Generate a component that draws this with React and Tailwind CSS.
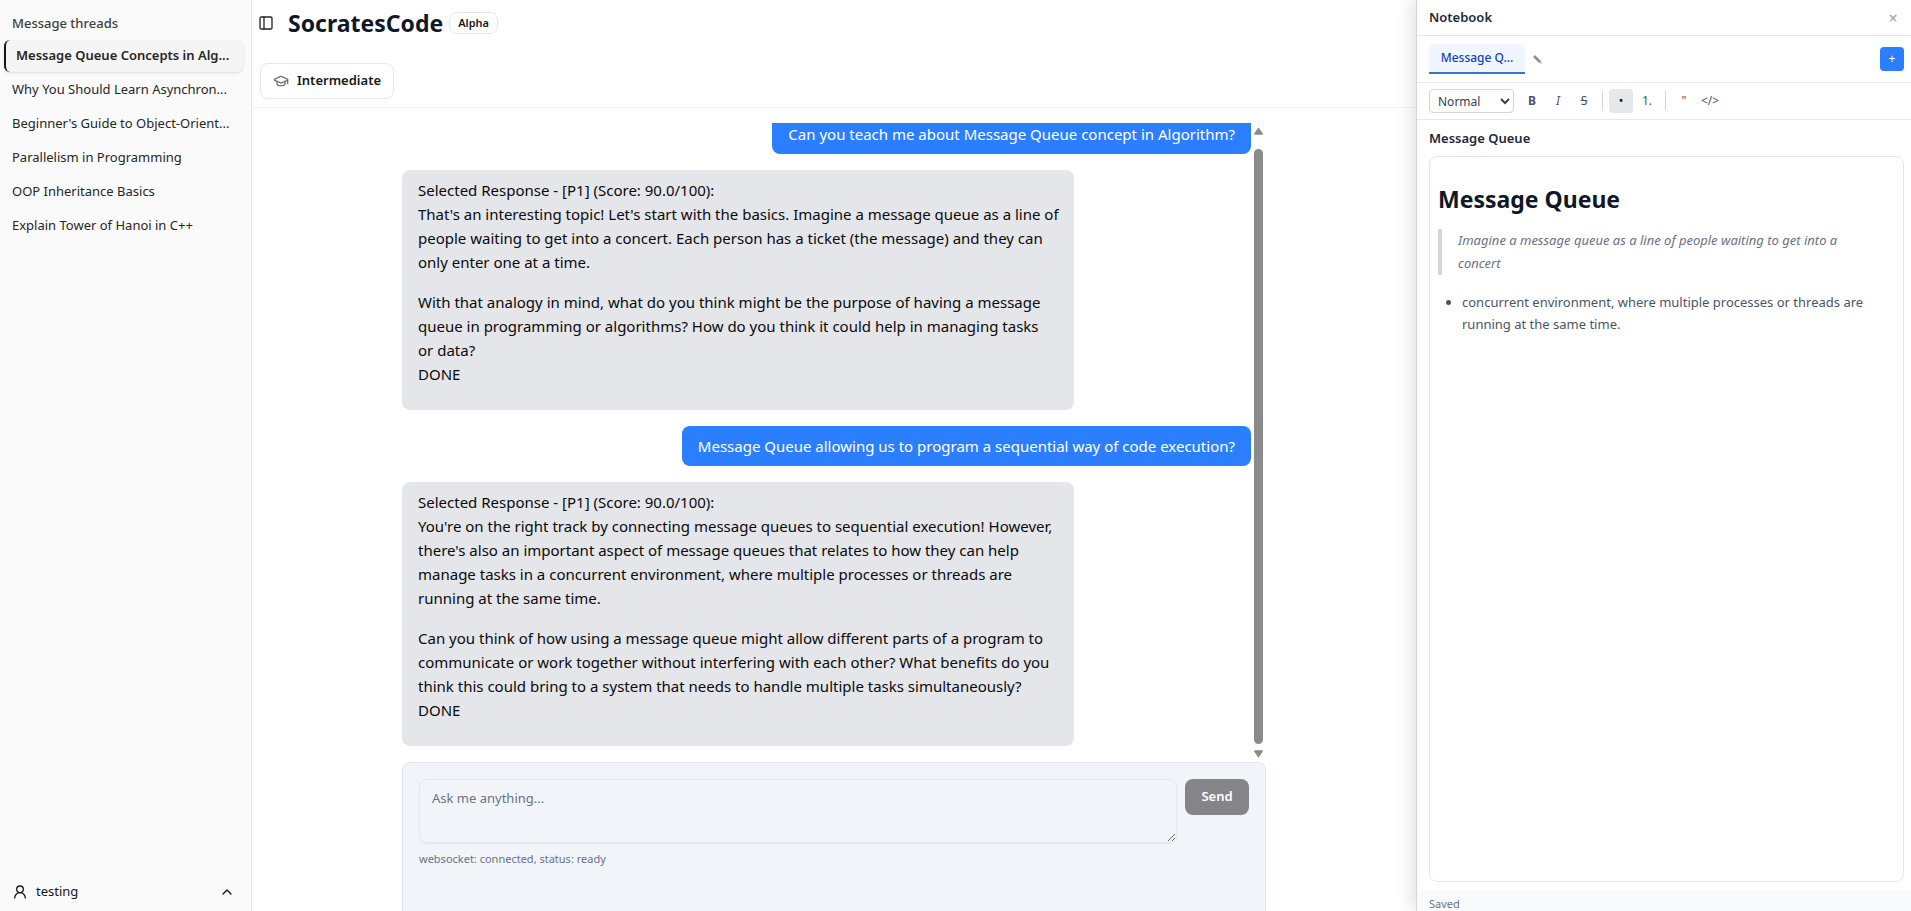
import { useState } from "react";
import { PanelLeft, GraduationCap, UserRound, ChevronUp } from "lucide-react";

const threads = [
  "Message Queue Concepts in Alg...",
  "Why You Should Learn Asynchron...",
  "Beginner's Guide to Object-Orient...",
  "Parallelism in Programming",
  "OOP Inheritance Basics",
  "Explain Tower of Hanoi in C++",
];

const messages = [
  { from: "user", text: ["Can you teach me about Message Queue concept in Algorithm?"] },
  {
    from: "bot",
    text: [
      "Selected Response - [P1] (Score: 90.0/100):\nThat's an interesting topic! Let's start with the basics. Imagine a message queue as a line of people waiting to get into a concert. Each person has a ticket (the message) and they can only enter one at a time.",
      "With that analogy in mind, what do you think might be the purpose of having a message queue in programming or algorithms? How do you think it could help in managing tasks\nor data?\nDONE",
    ],
  },
  { from: "user", text: ["Message Queue allowing us to program a sequential way of code execution?"] },
  {
    from: "bot",
    text: [
      "Selected Response - [P1] (Score: 90.0/100):\nYou're on the right track by connecting message queues to sequential execution! However, there's also an important aspect of message queues that relates to how they can help manage tasks in a concurrent environment, where multiple processes or threads are running at the same time.",
      "Can you think of how using a message queue might allow different parts of a program to communicate or work together without interfering with each other? What benefits do you think this could bring to a system that needs to handle multiple tasks simultaneously?\nDONE",
    ],
  },
];

function Sidebar() {
  const [active, setActive] = useState(0);

  return (
    <aside className="w-[252px] shrink-0 flex flex-col bg-[#fafafa] border-r border-gray-200">
      <h2 className="px-3 pt-[11px] h-10 text-[13px] leading-6 font-medium text-neutral-700">Message threads</h2>
      <nav className="flex-1 flex flex-col gap-0.5 pl-1 pr-2">
        {threads.map((t, i) => (
          <button
            key={t}
            onClick={() => setActive(i)}
            className={
              i === active
                ? "h-8 pl-2.5 text-left whitespace-nowrap text-[13px] font-semibold text-neutral-800 bg-neutral-100 rounded-md border-l-2 border-neutral-900 shadow-sm"
                : "h-8 pl-2 text-left whitespace-nowrap text-[13px] text-neutral-800"
            }
          >
            {t}
          </button>
        ))}
      </nav>
      <button className="flex items-center gap-2 h-[38px] pl-3 pr-4 text-[13px] text-neutral-900">
        <UserRound size={16} />
        <span className="flex-1 text-left">testing</span>
        <ChevronUp size={16} />
      </button>
    </aside>
  );
}

function Header() {
  return (
    <header className="h-[108px] shrink-0 flex flex-col border-b border-gray-100">
      <div className="flex items-center h-[46px] pl-1.5">
        <button aria-label="Toggle sidebar" className="text-neutral-800">
          <PanelLeft size={16} />
        </button>
        <h1 className="ml-3.5 text-[23px] font-bold text-gray-900">SocratesCode</h1>
        <span className="ml-1.5 h-[22px] px-2 flex items-center text-[11px] font-semibold text-neutral-900 border border-gray-200 rounded-lg">
          Alpha
        </span>
      </div>
      <div className="pl-2 pt-[17px]">
        <button className="flex items-center gap-2 h-9 px-3 text-[13px] font-semibold text-neutral-900 bg-white border border-gray-200 rounded-lg">
          <GraduationCap size={16} className="text-neutral-500" />
          Intermediate
        </button>
      </div>
    </header>
  );
}

function Scrollbar() {
  return (
    <div className="w-[15px] shrink-0 flex flex-col items-center py-1 text-[#8b8b8b]">
      <svg width="9" height="8" viewBox="0 0 9 8" fill="currentColor">
        <path d="M4.5 0.2 L8.8 6.4 Q9.1 7.8 7.8 7.8 H1.2 Q-0.1 7.8 0.2 6.4 Z" />
      </svg>
      <div className="w-[9px] flex-1 mt-3.5 mb-1.5 rounded-full bg-[#8b8b8b]" />
      <svg width="9" height="8" viewBox="0 0 9 8" fill="currentColor">
        <path d="M4.5 7.8 L8.8 1.6 Q9.1 0.2 7.8 0.2 H1.2 Q-0.1 0.2 0.2 1.6 Z" />
      </svg>
    </div>
  );
}

function Message({ msg }) {
  if (msg.from === "user") {
    return (
      <div className="self-end shrink-0 px-4 py-2 rounded-lg bg-[#2b7fff] text-white">{msg.text[0]}</div>
    );
  }
  return (
    <div className="self-start shrink-0 max-w-2xl pl-4 pr-3 py-2 rounded-lg bg-[#e5e6ea] text-neutral-950">
      {msg.text.map((p) => (
        <p key={p} className="mb-4 whitespace-pre-line">{p}</p>
      ))}
    </div>
  );
}

function Chat() {
  const [text, setText] = useState("");

  return (
    <div className="flex-1 min-h-0 w-full max-w-4xl mx-auto px-4 pt-[15px] flex flex-col">
      <div className="flex-1 min-h-0 flex">
        <div className="flex-1 flex flex-col justify-end gap-4 pb-4 overflow-hidden text-[15px] leading-6">
          {messages.map((m, i) => (
            <Message key={i} msg={m} />
          ))}
        </div>
        <Scrollbar />
      </div>
      <form
        onSubmit={(e) => e.preventDefault()}
        className="h-[149px] shrink-0 p-4 bg-slate-100 border border-b-0 border-slate-200 rounded-t-lg"
      >
        <div className="flex items-start gap-2">
          <textarea
            aria-label="Message"
            value={text}
            onChange={(e) => setText(e.target.value)}
            placeholder="Ask me anything..."
            className="flex-1 h-16 px-3 py-2 text-[13px] leading-5 border border-gray-200 rounded-lg shadow-xs placeholder:text-gray-500"
          />
          <button className="w-16 h-9 text-[13px] font-semibold text-white bg-[#858588] rounded-lg">Send</button>
        </div>
        <p className="mt-2 text-[11px] leading-4 text-gray-500">websocket: connected, status: ready</p>
      </form>
    </div>
  );
}

const toolBtn = "w-6 h-6 flex items-center justify-center rounded-sm text-xs text-gray-600";

function Notebook() {
  return (
    <aside className="w-[495px] shrink-0 z-10 flex flex-col bg-white border-l border-gray-300 shadow-[-4px_0_16px_rgba(0,0,0,0.12)]">
      <div className="h-9 shrink-0 flex items-center justify-between px-3 border-b border-gray-200">
        <h2 className="text-[13px] font-semibold text-gray-800">Notebook</h2>
        <button aria-label="Close" className="w-3 text-base text-gray-400">×</button>
      </div>
      <div className="h-[47px] shrink-0 flex items-center pl-3 pr-[7px] border-b border-gray-200">
        <button className="h-[30px] w-24 whitespace-nowrap text-xs font-medium text-blue-800 bg-[#eff6ff] border-b-2 border-[#3578c8] rounded-t-md">
          Message Q...
        </button>
        <button aria-label="Rename" className="ml-2 text-gray-400">
          <svg width="9" height="9" viewBox="0 0 9 9" fill="none">
            <path d="M1 1 L7 7" stroke="#8b9099" strokeWidth="2.6" />
            <path d="M6 7.8 L7.8 6 L8.8 8.8 Z" fill="#a7abb2" />
          </svg>
        </button>
        <button aria-label="New note" className="ml-auto w-6 h-6 text-xs text-white bg-[#2b7fff] rounded-sm">+</button>
      </div>
      <div className="h-[37px] shrink-0 flex items-center gap-0.5 px-3 border-b border-gray-200">
        <select aria-label="Text style" className="w-[85px] h-6 mr-1 pl-1 text-xs text-gray-700 bg-white border border-gray-300 rounded-sm">
          <option>Normal</option>
          <option>Heading 1</option>
          <option>Heading 2</option>
        </select>
        <button className={toolBtn + " font-bold"}>B</button>
        <button className={toolBtn + " italic"}>I</button>
        <button className={toolBtn + " line-through"}>S</button>
        <div className="w-px h-5 mx-1 bg-gray-300" />
        <button className="w-6 h-6 flex items-center justify-center rounded-sm text-xs text-gray-900 bg-gray-200">•</button>
        <button className={toolBtn}>1.</button>
        <div className="w-px h-5 mx-1 bg-gray-300" />
        <button className={toolBtn}>"</button>
        <button className={toolBtn}>&lt;/&gt;</button>
      </div>
      <div className="flex-1 min-h-0 flex flex-col pl-3 pr-[7px] pt-2 pb-2">
        <h3 className="h-7 text-[13px] leading-5 font-semibold text-gray-800">Message Queue</h3>
        <div className="flex-1 px-2 pt-6 border border-gray-200 rounded-lg text-[13px] text-gray-600">
          <h1 className="mb-3 text-[23px] leading-9 font-bold text-gray-900">Message Queue</h1>
          <blockquote className="mb-4 pl-4 pr-8 border-l-4 border-gray-300 italic leading-[23px] text-gray-500">
            Imagine a message queue as a line of people waiting to get into a concert
          </blockquote>
          <ul className="list-disc pl-6 leading-[22px]">
            <li>concurrent environment, where multiple processes or threads are running at the same time.</li>
          </ul>
        </div>
      </div>
      <div className="h-[21px] shrink-0 pl-3 pt-1.5 overflow-hidden bg-gray-50 text-[11px] leading-4 text-gray-500">Saved</div>
    </aside>
  );
}

export default function App() {
  return (
    <div className="h-screen flex overflow-hidden bg-white font-['Segoe_UI','Noto_Sans','Open_Sans',sans-serif]">
      <Sidebar />
      <main className="flex-1 min-w-0 flex flex-col">
        <Header />
        <Chat />
      </main>
      <Notebook />
    </div>
  );
}
